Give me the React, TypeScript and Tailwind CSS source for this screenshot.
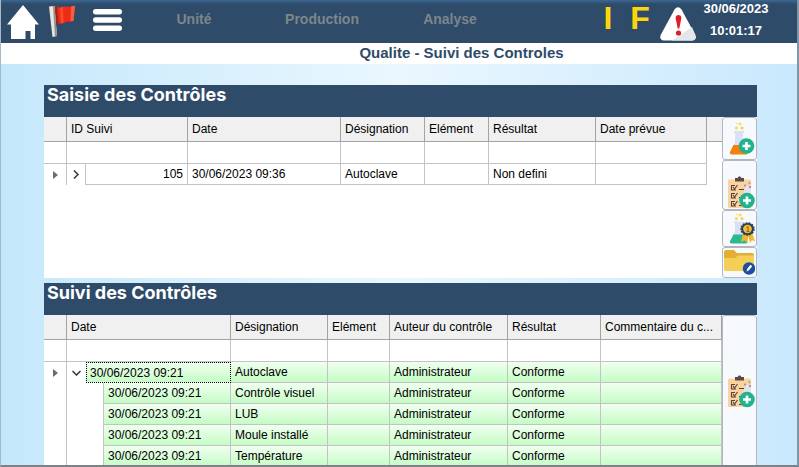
import type { ReactNode } from 'react'

type Suivi = {
  date: string
  designation: string
}

const suivis: Suivi[] = [
  { date: '30/06/2023 09:21', designation: 'Autoclave' },
  { date: '30/06/2023 09:21', designation: 'Contrôle visuel' },
  { date: '30/06/2023 09:21', designation: 'LUB' },
  { date: '30/06/2023 09:21', designation: 'Moule installé' },
  { date: '30/06/2023 09:21', designation: 'Température' },
]

const th = 'h-[25px] border-r border-b border-[#a3a3a3] bg-[#eff0ef] px-1 text-left font-normal whitespace-nowrap'
const td = 'h-[21px] border-r border-b border-[#c3c3c3] px-1 whitespace-nowrap'
const green = 'bg-linear-to-b from-[#f1fff1] to-[#c4fcc4]'

function HomeIcon() {
  return (
    <svg width="32" height="34" viewBox="0 0 32 34" fill="#fff">
      <path d="M16 0 32 19.500H28V34H23.500V26H18.500V34H4V19.500H0Z" />
    </svg>
  )
}

function FlagIcon() {
  return (
    <svg width="27" height="33" viewBox="0 0 27 33">
      <path d="M6 1.500C10 4 13 1 17 1.500S23 2 26 0.800L24.500 16C21 17 20 16 16 17.500S10 19 7.500 18Z" fill="#ee2a18" />
      <path d="M6 1.500 8 2.300 9.500 18.300 7.500 18Z" fill="#a81d15" />
      <path d="M11 2.700 14 1.800 14.500 18 12 18.500Z" fill="#fb4a2c" />
      <path d="M22 1.600 26 0.800 24.500 16 21.500 16.400Z" fill="#f4603f" />
      <path d="M0 1.500 5.500 1 8 31 3.500 32Z" fill="#e9e6e0" />
      <path d="M4 1.200 5.500 1 8 31 6 31.500Z" fill="#958f88" />
    </svg>
  )
}

function MenuIcon() {
  return (
    <svg width="29" height="22" viewBox="0 0 29 22" fill="#fff">
      <rect width="29" height="5.500" rx="2.700" />
      <rect y="8.200" width="29" height="5.500" rx="2.700" />
      <rect y="16.400" width="29" height="5.500" rx="2.700" />
    </svg>
  )
}

function AlertIcon() {
  return (
    <svg width="36" height="34" viewBox="0 0 36 34">
      <path d="M14.500 2.500Q18 -2 21.500 2.500L35.300 28Q37 33 32 33.500H4Q-1 33 0.700 28Z" fill="#fff" />
      <path d="M12 33.500 32 20 35.300 28Q37 33 32 33.500Z" fill="#e3e7ea" />
      <path d="M18.500 8C22 8 21.500 11.500 20.800 14L19.300 21.500H17.700L16.200 14C15.500 11.500 15 8 18.500 8Z" fill="#e01e2b" />
      <circle cx="18.500" cy="26" r="2.600" fill="#e01e2b" />
    </svg>
  )
}

function PlusBadge({ cx, cy }: { cx: number; cy: number }) {
  return (
    <g>
      <circle cx={cx} cy={cy} r="7.800" fill="#22b28e" />
      <path d={`M${cx - 4} ${cy}H${cx + 4}M${cx} ${cy - 4}V${cy + 4}`} stroke="#fff" strokeWidth="2.600" />
    </g>
  )
}

function Flask({ liquid }: { liquid: string }) {
  return (
    <g>
      <circle cx="7.500" cy="6" r="1.700" fill="#f8dc62" />
      <circle cx="11" cy="2" r="1.600" fill="#f8dc62" />
      <circle cx="13" cy="6" r="1.500" fill="#f5d042" />
      <circle cx="7.500" cy="1.500" r="0.800" fill="#f8dc62" />
      <path d="M5 9H15V11H14V20L19 30H1L6 20V11H5Z" fill="#dce0f4" />
      <path d="M4.500 23H15L18.500 30Q19 32.500 17 32.500H3Q0 32 1 30Z" fill={liquid} />
    </g>
  )
}

function FlaskAddIcon() {
  return (
    <svg width="26" height="33" viewBox="0 0 26 33">
      <Flask liquid="#f77f0b" />
      <PlusBadge cx={17.5} cy={24} />
    </svg>
  )
}

function FlaskMedalIcon() {
  return (
    <svg width="26" height="31" viewBox="0 0 26 33" preserveAspectRatio="none">
      <Flask liquid="#2db894" />
      <path d="M14 22 12 31 16 29 18 32 19.500 25 21 32 23 29 26 30 23 21Z" fill="#efb92f" />
      <circle cx="18.500" cy="17" r="6.300" fill="#2a4158" stroke="#2a4158" strokeWidth="1.800" strokeDasharray="2 1" />
      <circle cx="18.500" cy="17" r="4.400" fill="#f1bd35" />
      <path d="M17.500 15.500 19 14.500V19M17.500 19.500H20.500" stroke="#765b24" fill="none" />
    </svg>
  )
}

function ChecklistIcon() {
  return (
    <svg width="27" height="33" viewBox="0 0 27 33">
      <rect y="3.500" width="23" height="28.500" rx="1" fill="#fbd3a0" />
      <path d="M7 5.500V2H9.500Q11.500 -1.500 13.500 2H16V5.500Z" fill="#5b4b47" />
      <g fill="none" stroke="#54403f" strokeWidth="1.100">
        <path d="M7 9.500H3.500V14H8M5 11 6.500 13 9.500 9M11 13.500H16" />
        <path d="M7 17.500H3.500V22H8M5 19 6.500 21 9.500 17M11 21.500H14" />
        <path d="M7 25.500H3.500V30H8M5 27 6.500 29 9.500 25M11 29.500H14" />
      </g>
      <path d="M18 10 23 9V17H15Z" fill="#dfe4ee" />
      <circle cx="17" cy="9.500" r="1" fill="#8b8f9b" />
      <circle cx="21.500" cy="7" r="1.200" fill="#b6a9a4" />
      <circle cx="22" cy="11" r="1" fill="#c26d52" />
      <PlusBadge cx={19} cy={24.5} />
    </svg>
  )
}

function FolderIcon() {
  return (
    <svg width="31" height="25" viewBox="0 0 31 25">
      <path d="M0 2Q0 0 2 0H10L13 3H28Q30 3 30 5V20H0Z" fill="#e3ae35" />
      <path d="M0 8H11L14 5.500H30V19Q30 21 28 21H2Q0 21 0 19Z" fill="#f3cf55" />
      <circle cx="25" cy="18.500" r="6.200" fill="#1c4e9f" />
      <path d="M22.500 21.500 23.200 18.800 26.500 14.800 28.200 16.200 25 20.300Z" fill="#fff" />
    </svg>
  )
}

function ToolButton({ label, className, children }: { label: string; className: string; children: ReactNode }) {
  return (
    <button
      aria-label={label}
      className={`flex justify-end rounded-[3px] border border-[#b4b6bd] bg-[#f6fafd] pr-px ${className}`}
    >
      {children}
    </button>
  )
}

function RowMarker() {
  return (
    <svg className="mx-auto" width="5" height="8" viewBox="0 0 5 8" fill="#6b6b6b">
      <path d="M0 0 5 4 0 8Z" />
    </svg>
  )
}

function FilterRow({ columns, first }: { columns: string[]; first: number }) {
  return (
    <tr>
      <td className={td} />
      {columns.map((name, i) => (
        <td key={name} colSpan={i === 0 ? first : 1} className="h-[22px] border-r border-b border-[#c3c3c3]">
          <input aria-label={`Filtrer ${name}`} className="block h-5 w-full px-1 outline-none" />
        </td>
      ))}
    </tr>
  )
}

function PanelTitle({ children }: { children: ReactNode }) {
  return (
    <h2 className="h-8 bg-[#2e4b69] px-[3px] font-[Inter,sans-serif] text-lg leading-5 font-bold text-white">
      {children}
    </h2>
  )
}

export default function App() {
  const saisieColumns = ['ID Suivi', 'Date', 'Désignation', 'Elément', 'Résultat', 'Date prévue']
  const suiviColumns = ['Date', 'Désignation', 'Elément', 'Auteur du contrôle', 'Résultat', 'Commentaire du c...']

  return (
    <div className="relative flex min-h-screen flex-col bg-[#c6e9fb] font-['Liberation_Sans',Arial,sans-serif] text-xs text-black">
      <header className="flex h-[43px] items-start bg-linear-to-b from-[#3a6893] from-0% via-[#2e4b69] via-10% to-[#2e4b69] pr-[23px] pl-[7px]">
        <button aria-label="Accueil" className="mt-[5px]">
          <HomeIcon />
        </button>
        <button aria-label="Signaler" className="mt-[5px] ml-[10px]">
          <FlagIcon />
        </button>
        <button aria-label="Menu" className="mt-[9px] ml-[17px]">
          <MenuIcon />
        </button>
        <nav className="ml-2 flex pt-[9px] text-sm font-bold text-[#7d868b]">
          <a href="#unite" className="w-32 text-center">Unité</a>
          <a href="#production" className="w-32 text-center">Production</a>
          <a href="#analyse" className="w-32 text-center">Analyse</a>
        </nav>
        <div className="ml-auto flex text-center font-bold">
          <span className="w-8 text-[32px] leading-9 text-[#fcd60a]">I</span>
          <span className="w-8 text-[32px] leading-9 text-[#fcd60a]">F</span>
          <button aria-label="Alarmes" className="mt-[5px] ml-1">
            <AlertIcon />
          </button>
          <div className="w-20 text-[13px] leading-[22px] text-white">
            <p className="-mt-[2px]">30/06/2023</p>
            <p>10:01:17</p>
          </div>
        </div>
      </header>

      <h1 className="h-[21px] bg-white pl-31 text-center text-[15px] leading-[19px] font-bold text-[#2e4b69]">
        Qualite - Suivi des Controles
      </h1>

      <main className="flex flex-1 flex-col gap-[5px] bg-linear-to-r from-[#c4e8fb] via-[#eaf7fe] to-[#c9e8fd] pt-[21px] pr-[42px] pl-[44px]">
        <section>
          <PanelTitle>Saisie des Contrôles</PanelTitle>
          <div className="flex bg-white">
            <div className="min-w-0 flex-1">
              <table className="w-full table-fixed border-separate border-spacing-0">
                <colgroup>
                  <col className="w-[23px]" />
                  <col className="w-[19px]" />
                  <col className="w-[102px]" />
                  <col className="w-[153px]" />
                  <col className="w-[84px]" />
                  <col className="w-[64px]" />
                  <col className="w-[107px]" />
                  <col className="w-[111px]" />
                  <col />
                </colgroup>
                <thead>
                  <tr>
                    <th className={th} />
                    {saisieColumns.map((name, i) => (
                      <th key={name} colSpan={i === 0 ? 2 : 1} className={th}>{name}</th>
                    ))}
                    <th className="border-b border-[#a3a3a3] bg-[#eff0ef]" />
                  </tr>
                </thead>
                <tbody>
                  <FilterRow columns={saisieColumns} first={2} />
                  <tr>
                    <td className="border-r border-[#c3c3c3]"><RowMarker /></td>
                    <td className="border-r border-[#c3c3c3]">
                      <button aria-label="Déplier" className="block w-full">
                        <svg className="mx-auto" width="6" height="9" viewBox="0 0 6 9" fill="none" stroke="#333" strokeWidth="1.500">
                          <path d="M1 0.500 5 4.500 1 8.500" />
                        </svg>
                      </button>
                    </td>
                    <td className={`${td} text-right`}>105</td>
                    <td className={td}>30/06/2023 09:36</td>
                    <td className={td}>Autoclave</td>
                    <td className={td} />
                    <td className={td}>Non defini</td>
                    <td className={td} />
                  </tr>
                </tbody>
              </table>
            </div>
            <div className="flex w-[35px] flex-col">
              <ToolButton label="Ajouter un contrôle" className="h-[43px] items-center"><FlaskAddIcon /></ToolButton>
              <ToolButton label="Ajouter une liste" className="h-[50px] items-end"><ChecklistIcon /></ToolButton>
              <ToolButton label="Valider le contrôle" className="h-[37px] items-center"><FlaskMedalIcon /></ToolButton>
              <ToolButton label="Ouvrir le dossier" className="h-[31px] items-center"><FolderIcon /></ToolButton>
            </div>
          </div>
        </section>

        <section className="flex flex-1 flex-col">
          <PanelTitle>Suivi des Contrôles</PanelTitle>
          <div className="flex flex-1 bg-white">
            <div className="min-w-0 flex-1">
              <table className="w-full table-fixed border-separate border-spacing-0">
                <colgroup>
                  <col className="w-[23px]" />
                  <col className="w-[19px]" />
                  <col className="w-[18px]" />
                  <col className="w-[127px]" />
                  <col className="w-[97px]" />
                  <col className="w-[62px]" />
                  <col className="w-[118px]" />
                  <col className="w-[93px]" />
                  <col />
                </colgroup>
                <thead>
                  <tr>
                    <th className={th} />
                    {suiviColumns.map((name, i) => (
                      <th key={name} colSpan={i === 0 ? 3 : 1} className={th}>{name}</th>
                    ))}
                  </tr>
                </thead>
                <tbody>
                  <FilterRow columns={suiviColumns} first={3} />
                  {suivis.map((row, i) => (
                    <tr key={i}>
                      <td className="border-r border-[#c3c3c3]">{i === 0 && <RowMarker />}</td>
                      {i === 0 ? (
                        <>
                          <td>
                            <button aria-label="Replier" className="block w-full">
                              <svg className="mx-auto" width="9" height="6" viewBox="0 0 9 6" fill="none" stroke="#333" strokeWidth="1.500">
                                <path d="M0.500 1 4.500 5 8.500 1" />
                              </svg>
                            </button>
                          </td>
                          <td colSpan={2} className={`h-[21px] border border-dotted border-black px-[3px] ${green}`}>{row.date}</td>
                        </>
                      ) : (
                        <>
                          <td colSpan={2} className="border-r border-[#c3c3c3]" />
                          <td className={`${td} ${green}`}>{row.date}</td>
                        </>
                      )}
                      <td className={`${td} ${green}`}>{row.designation}</td>
                      <td className={`${td} ${green}`} />
                      <td className={`${td} ${green}`}>Administrateur</td>
                      <td className={`${td} ${green}`}>Conforme</td>
                      <td className={`${td} ${green}`} />
                    </tr>
                  ))}
                </tbody>
              </table>
            </div>
            <div className="flex w-[35px] flex-col">
              <ToolButton label="Ajouter un suivi" className="flex-1 items-center"><ChecklistIcon /></ToolButton>
            </div>
          </div>
        </section>
      </main>

      {/* window frame */}
      <div className="pointer-events-none absolute inset-0 border-r-2 border-b-2 border-l border-r-[#8097a8] border-b-[#7c8286] border-l-[#a9b9c4]" />
    </div>
  )
}
